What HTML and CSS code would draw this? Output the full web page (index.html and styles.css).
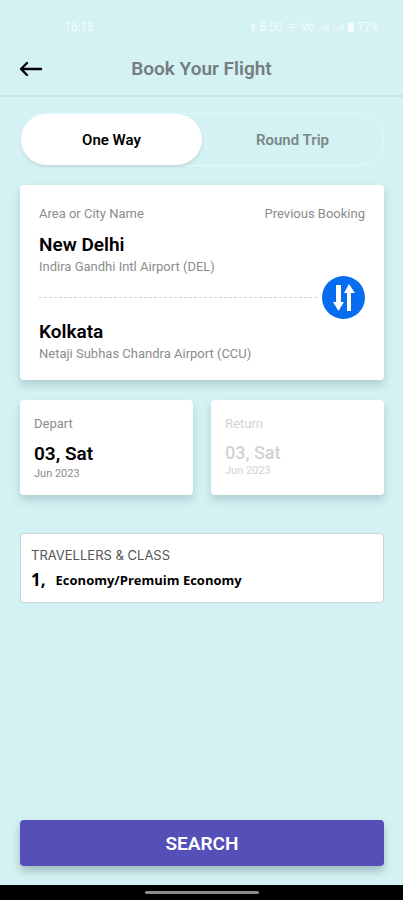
FILE: index.html
```html
<!DOCTYPE html>
<html lang="en">
<head>
  <meta charset="UTF-8">
  <meta name="viewport" content="width=device-width, initial-scale=1.0">
  <title>Book Your Flight</title>
  <link rel="stylesheet" href="styles.css">
</head>
<body>
  <div class="status-bar">
    <span>16:18</span>
    <div class="status-icons">
      <svg width="6" height="10" viewBox="0 0 6 10"><path d="M1 3l4 4-2 2V1l2 2-4 4" fill="none" stroke="currentColor"/></svg>
      <span>5.50</span>
      <svg width="12" height="10" viewBox="0 0 12 10"><path d="M1 4q5-4 10 0M3 6q3-2 6 0M5 8h2" fill="none" stroke="currentColor"/></svg>
      <span>Vo</span>
      <svg width="12" height="10" viewBox="0 0 12 10"><path d="M1 9V7M4 9V5M7 9V3M10 9V1" stroke="currentColor"/></svg>
      <svg width="12" height="10" viewBox="0 0 12 10"><path d="M1 9V7M4 9V5M7 9V3M10 9V1" stroke="currentColor"/></svg>
      <svg width="6" height="10" viewBox="0 0 6 10"><path d="M2 0h2v1h2v9H0V1h2z" fill="currentColor"/></svg>
      <span>77%</span>
    </div>
  </div>

  <header class="header">
    <a class="back" href="#" aria-label="Back">
      <svg width="24" height="16" viewBox="0 0 24 16"><path d="M22 8H2M8 2L2 8l6 6" fill="none" stroke="#000" stroke-width="2.400" stroke-linecap="round" stroke-linejoin="round"/></svg>
    </a>
    <h1>Book Your Flight</h1>
  </header>

  <main class="container">
    <div class="trip-type">
      <button class="trip active" type="button">One Way</button>
      <button class="trip" type="button">Round Trip</button>
    </div>

    <section class="card route">
      <div class="route-top">
        <span>Area or City Name</span>
        <span>Previous Booking</span>
      </div>
      <h2>New Delhi</h2>
      <p class="airport">Indira Gandhi Intl Airport (DEL)</p>
      <div class="swap-row">
        <div class="dashes"></div>
        <button class="swap" type="button" aria-label="Swap cities">
          <svg width="43" height="43" viewBox="0 0 43 43">
            <path d="M14 9h5v17h3l-5.500 9L11 26h3z" fill="#fff"/>
            <path d="M25 35h4V17h4l-6-9-5 9h3z" fill="#fff"/>
          </svg>
        </button>
      </div>
      <h2>Kolkata</h2>
      <p class="airport">Netaji Subhas Chandra Airport (CCU)</p>
    </section>

    <div class="dates">
      <section class="card date">
        <p class="date-label">Depart</p>
        <h2>03, Sat</h2>
        <p class="month">Jun 2023</p>
      </section>
      <section class="card date disabled">
        <p class="date-label">Return</p>
        <h2>03, Sat</h2>
        <p class="month">Jun 2023</p>
      </section>
    </div>

    <section class="travellers">
      <h3>TRAVELLERS &amp; CLASS</h3>
      <p class="class-row"><span class="count">1,</span><span>Economy/Premuim Economy</span></p>
    </section>

    <button class="search" type="button">SEARCH</button>
  </main>

  <div class="nav-bar"><div class="nav-handle"></div></div>
</body>
</html>
```
FILE: styles.css
```css
* {
  box-sizing: border-box;
}

body {
  margin: 0;
  min-height: 100vh;
  display: flex;
  flex-direction: column;
  background-color: #d4f1f3;
  color: #000;
  font-family: Roboto, Arial, sans-serif;
}

h1, h2, h3, p {
  margin: 0;
}

button {
  border: none;
  padding: 0;
  font-family: inherit;
  cursor: pointer;
}

svg {
  display: block;
}

.status-bar {
  display: flex;
  justify-content: space-between;
  padding: 20px 24px 8px 64px;
  color: #f3fdfd;
  font-size: 12px;
  line-height: 14px;
}

.status-icons {
  display: flex;
  align-items: center;
  gap: 3px;
}

.header {
  display: grid;
  grid-template-columns: 24px 1fr 24px;
  align-items: center;
  height: 55px;
  padding: 0 19px;
  border-bottom: 2px solid #c5e4e6;
}

.header h1 {
  text-align: center;
  color: #747e80;
  font-size: 19px;
  line-height: 24px;
  font-weight: 600;
}

.container {
  flex: 1;
  display: flex;
  flex-direction: column;
  padding: 16px 19px 19px 20px;
}

.trip-type {
  display: flex;
  height: 53px;
  margin-bottom: 19px;
  border: 1px solid #e6f9fa;
  border-radius: 27px;
}

.trip {
  flex: 1;
  border-radius: 27px;
  background: none;
  color: #7a8789;
  font-size: 15px;
  font-weight: 600;
}

.trip.active {
  background-color: #fff;
  color: #000;
  box-shadow: 0 2px 3px #bfd9d4;
}

.card {
  background-color: #fff;
  border-radius: 4px;
  box-shadow: 0 5px 8px #adcfd1;
}

.card h2 {
  font-size: 19px;
  line-height: 24px;
  font-weight: 600;
}

.route {
  padding: 20px 19px 17px;
  margin-bottom: 20px;
}

.route-top {
  display: flex;
  justify-content: space-between;
  margin-bottom: 11px;
  color: #8c8c8c;
  font-size: 13px;
  line-height: 17px;
}

.airport {
  color: #8c8c8c;
  font-size: 13px;
  line-height: 19px;
}

.swap-row {
  display: flex;
  align-items: center;
  gap: 5px;
  margin-bottom: 1px;
}

.dashes {
  flex: 1;
  border-top: 1px dashed #d0d0d0;
}

.swap {
  width: 43px;
  height: 43px;
  border-radius: 50%;
  background-color: #066cf0;
}

.dates {
  display: grid;
  grid-template-columns: 1fr 1fr;
  gap: 18px;
  margin-bottom: 38px;
}

.date {
  padding: 16px 14px 14px;
}

.date-label {
  margin-bottom: 10px;
  color: #8c8c8c;
  font-size: 13px;
  line-height: 16px;
}

.month {
  color: #8c8c8c;
  font-size: 11px;
  line-height: 15px;
}

.disabled h2,
.disabled p {
  color: #d2d2d2;
}

.disabled h2 {
  font-size: 18px;
  line-height: 21px;
  font-weight: 500;
}

.travellers {
  padding: 12px 10px 10px;
  border: 1px solid #cbd3d3;
  border-radius: 4px;
  background-color: #fff;
}

.travellers h3 {
  margin-bottom: 4px;
  color: #555;
  font-family: Inter, Arial, sans-serif;
  font-size: 13px;
  line-height: 18px;
  font-weight: 400;
}

.class-row {
  display: flex;
  align-items: center;
  gap: 10px;
  font-family: "Open Sans", Arial, sans-serif;
  font-size: 13px;
  line-height: 24px;
  font-weight: 700;
}

.count {
  font-size: 17px;
}

.search {
  height: 46px;
  margin-top: auto;
  border-radius: 4px;
  background-color: #554fb8;
  box-shadow: 0 5px 8px #9fbcbf;
  color: #fff;
  font-size: 19px;
  font-weight: 600;
}

.nav-bar {
  display: flex;
  justify-content: center;
  align-items: center;
  height: 15px;
  background-color: #000;
}

.nav-handle {
  width: 114px;
  height: 3px;
  border-radius: 2px;
  background-color: #8c8c8c;
}
```
